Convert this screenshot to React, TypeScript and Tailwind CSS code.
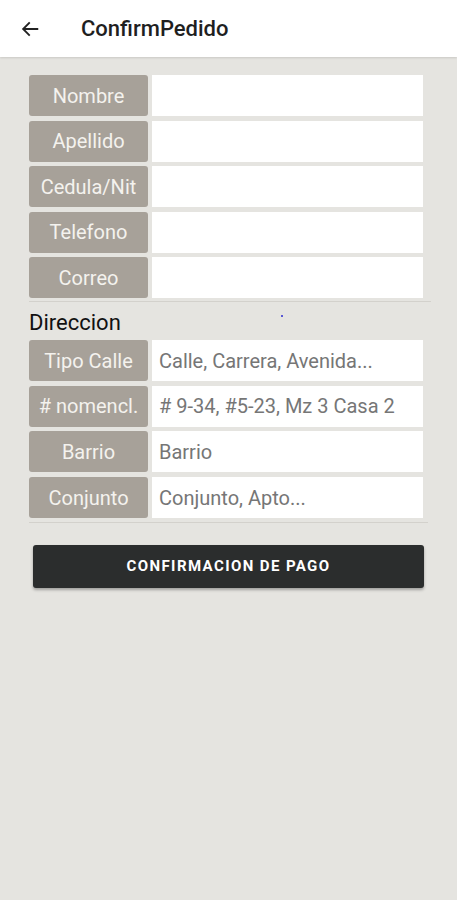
import React from "react";

const personal = ["Nombre", "Apellido", "Cedula/Nit", "Telefono", "Correo"];

const address = [
  { label: "Tipo Calle", hint: "Calle, Carrera, Avenida..." },
  { label: "# nomencl.", hint: "# 9-34, #5-23, Mz 3 Casa 2" },
  { label: "Barrio", hint: "Barrio" },
  { label: "Conjunto", hint: "Conjunto, Apto..." },
];

function Row({ label, hint }: { label: string; hint?: string }) {
  return (
    <div className="flex h-[41px] items-stretch">
      <div className="flex w-[119px] items-center justify-center rounded-[3px] bg-[#a7a199] text-[20px] text-[#f4f2ee] whitespace-nowrap">
        {label}
      </div>
      <div className="ml-[4px] flex w-[271px] items-center bg-white pl-[7px] text-[20px] text-[#767676] whitespace-nowrap">
        {hint}
      </div>
    </div>
  );
}

export default function App() {
  return (
    <div
      className="min-h-[900px] bg-[#e5e4e0]"
      style={{ fontFamily: "Roboto, 'Noto Sans', sans-serif" }}
    >
      <header className="flex h-[57px] items-center bg-white shadow-[0_1px_2px_rgba(0,0,0,0.12)]">
        <svg
          className="ml-[19px]"
          width="22"
          height="22"
          viewBox="0 0 24 24"
          fill="none"
          stroke="#222"
          strokeWidth="2"
          strokeLinecap="square"
        >
          <path d="M20 12H5M11 5.5L4.5 12 11 18.5" />
        </svg>
        <h1 className="ml-[40px] text-[22px] font-medium text-[#1f1f1f]">ConfirmPedido</h1>
      </header>

      <main className="px-[29px] pt-[18px]">
        <div className="flex flex-col gap-[4.5px]">
          {personal.map((p) => (
            <Row key={p} label={p} />
          ))}
        </div>
        <div className="mt-[3px] h-[1px] w-[402px] bg-[#d3d1cc]" />

        <div className="relative mt-[8px] h-[26px] text-[22px] leading-[26px] text-[#111]">
          Direccion
          <span className="absolute left-[252px] top-[5px] h-[2px] w-[2px] rounded-full bg-[#2a2ad0]" />
        </div>

        <div className="mt-[4px] flex flex-col gap-[4.7px]">
          {address.map((a) => (
            <Row key={a.label} label={a.label} hint={a.hint} />
          ))}
        </div>
        <div className="mt-[4px] h-[1px] w-[399px] bg-[#d3d1cc]" />

        <button className="ml-[4px] mt-[22px] flex h-[43px] w-[391px] items-center justify-center rounded-[3px] bg-[#2b2d2d] text-[15px] font-bold tracking-[1.4px] text-white shadow-[0_2px_3px_rgba(0,0,0,0.3)]">
          CONFIRMACION DE PAGO
        </button>
      </main>
    </div>
  );
}
